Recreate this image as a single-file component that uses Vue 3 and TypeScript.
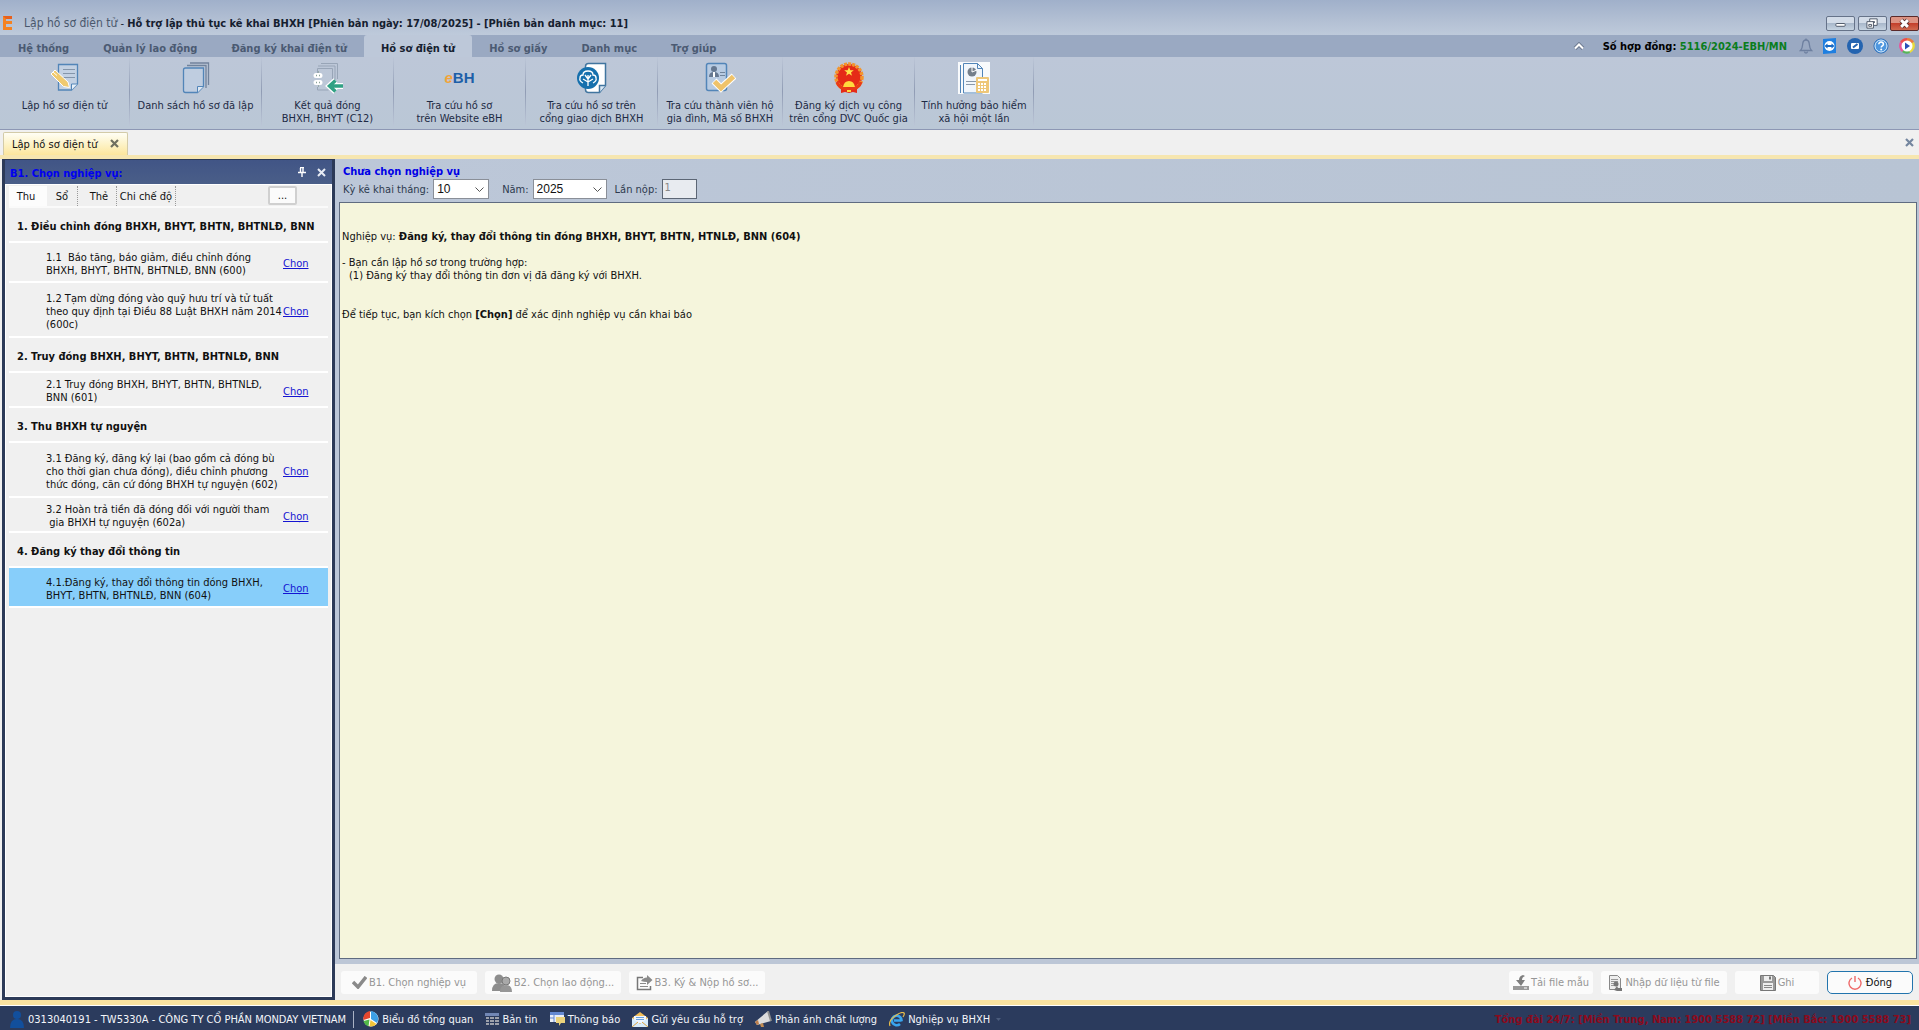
<script setup lang="ts">
import { ref } from 'vue'

interface Command {
  icon: string
  lines: string[]
  width: number
}
interface TaskRow {
  text: string[]
  heading?: boolean
  selected?: boolean
  size: 'two' | 'three' | 'head' | 'short'
}

const menuTabs = ['Hệ thống', 'Quản lý lao động', 'Đăng ký khai điện tử', 'Hồ sơ điện tử', 'Hồ sơ giấy', 'Danh mục', 'Trợ giúp']
const activeMenu = ref('Hồ sơ điện tử')

const commands: Command[] = [
  { icon: 'edit', lines: ['Lập hồ sơ điện tử'], width: 130 },
  { icon: 'pages', lines: ['Danh sách hồ sơ đã lập'], width: 132 },
  { icon: 'result', lines: ['Kết quả đóng', 'BHXH, BHYT (C12)'], width: 132 },
  { icon: 'ebh', lines: ['Tra cứu hồ sơ', 'trên Website eBH'], width: 132 },
  { icon: 'vss', lines: ['Tra cứu hồ sơ trên', 'cổng giao dịch BHXH'], width: 132 },
  { icon: 'member', lines: ['Tra cứu thành viên hộ', 'gia đình, Mã số BHXH'], width: 125 },
  { icon: 'emblem', lines: ['Đăng ký dịch vụ công', 'trên cổng DVC Quốc gia'], width: 132 },
  { icon: 'calc', lines: ['Tính hưởng bảo hiểm', 'xã hội một lần'], width: 119 },
]

const panelTabs = ['Thu', 'Sổ', 'Thẻ', 'Chi chế độ']
const activePanelTab = ref('Thu')

const rows: TaskRow[] = [
  { heading: true, size: 'head', text: ['1. Điều chỉnh đóng BHXH, BHYT, BHTN, BHTNLĐ, BNN'] },
  { size: 'two', text: ['1.1  Báo tăng, báo giảm, điều chỉnh đóng', 'BHXH, BHYT, BHTN, BHTNLĐ, BNN (600)'] },
  { size: 'three', text: ['1.2 Tạm dừng đóng vào quỹ hưu trí và tử tuất', 'theo quy định tại Điều 88 Luật BHXH năm 2014', '(600c)'] },
  { heading: true, size: 'head', text: ['2. Truy đóng BHXH, BHYT, BHTN, BHTNLĐ, BNN'] },
  { size: 'short', text: ['2.1 Truy đóng BHXH, BHYT, BHTN, BHTNLĐ,', 'BNN (601)'] },
  { heading: true, size: 'head', text: ['3. Thu BHXH tự nguyện'] },
  { size: 'three', text: ['3.1 Đăng ký, đăng ký lại (bao gồm cả đóng bù', 'cho thời gian chưa đóng), điều chỉnh phương', 'thức đóng, căn cứ đóng BHXH tự nguyện (602)'] },
  { size: 'short', text: ['3.2 Hoàn trả tiền đã đóng đối với người tham', ' gia BHXH tự nguyện (602a)'] },
  { heading: true, size: 'head', text: ['4. Đăng ký thay đổi thông tin'] },
  { size: 'two', selected: true, text: ['4.1.Đăng ký, thay đổi thông tin đóng BHXH,', 'BHYT, BHTN, BHTNLĐ, BNN (604)'] },
]

const month = ref('10')
const year = ref('2025')
const submission = ref('1')
</script>

<template>
  <div class="app">
    <header class="titlebar">
      <svg class="logo" width="10" height="14" viewBox="0 0 10 14">
        <path d="M0 0h9v3H3v2h6v3H3v3h6v3H0z" fill="#f58220" />
        <path d="M0 0h9v3H3z" fill="#e8601c" />
      </svg>
      <h1><span>Lập hồ sơ điện tử</span> - <b>Hỗ trợ lập thủ tục kê khai BHXH [Phiên bản ngày: 17/08/2025] - [Phiên bản danh mục: 11]</b></h1>
      <div class="winbtns">
        <button type="button" aria-label="Minimize">
          <svg width="29" height="13" viewBox="0 0 29 13"><rect x="9.500" y="6.500" width="10" height="3" rx="1" fill="#fff" stroke="#4a5464" /></svg>
        </button>
        <button type="button" aria-label="Restore">
          <svg width="29" height="13" viewBox="0 0 29 13">
            <path d="M11.500 1.500h8v7h-8z" fill="#fff" stroke="#4a5464" /><path d="M14 4h3v2h-3z" fill="#4a5464" />
            <path d="M8.500 4.500h7v7h-7z" fill="#fff" stroke="#4a5464" /><path d="M10.500 7.500h3v2h-3z" fill="none" stroke="#4a5464" />
          </svg>
        </button>
        <button type="button" class="red" aria-label="Close">
          <svg width="28" height="13" viewBox="0 0 28 13">
            <path d="M10.500 3l7 7M17.500 3l-7 7" stroke="#5a3030" stroke-width="5" /><path d="M10.500 3l7 7M17.500 3l-7 7" stroke="#fff" stroke-width="3" />
          </svg>
        </button>
      </div>
    </header>

    <div class="menubar">
      <nav>
        <button v-for="m in menuTabs" :key="m" type="button" :class="{ active: m === activeMenu }" @click="activeMenu = m">{{ m }}</button>
      </nav>
      <div class="contract">
        <svg class="chev" width="12" height="8" viewBox="0 0 12 8"><path d="M2 6.500l4-4 4 4" fill="none" stroke="#6d7a90" stroke-width="4" /><path d="M2 6.500l4-4 4 4" fill="none" stroke="#fff" stroke-width="2" /></svg>
        <span class="label">Số hợp đồng: <em>5116/2024-EBH/MN</em></span>
        <svg width="14" height="16" viewBox="0 0 14 16"><path d="M1.500 12.500c2-2 2-4 2.200-6.500.2-2.500 1.500-4 3.300-4s3.100 1.500 3.300 4c.2 2.500.2 4.500 2.200 6.500z" fill="none" stroke="#6d7f9f" stroke-width="1.300" /><path d="M5.500 13.500a1.500 1.500 0 0 0 3 0M7 .5v1.500" fill="none" stroke="#6d7f9f" stroke-width="1.300" /></svg>
        <svg width="14" height="16" viewBox="0 0 14 16"><path d="M0 1l13-1v15l-13 1z" fill="#1f7fe0" /><circle cx="6.500" cy="8" r="5" fill="#fff" /><path d="M1.500 8l3-2.500v1.500h4V5.500l3 2.500-3 2.500V9h-4v1.500z" fill="#1769c4" /></svg>
        <svg width="16" height="16" viewBox="0 0 16 16"><circle cx="8" cy="8" r="8" fill="#2464b0" /><rect x="4" y="5" width="8" height="6" rx="1" fill="#fff" /><path d="M6 9.500L10.500 6" stroke="#2464b0" stroke-width="2" /></svg>
        <svg width="16" height="16" viewBox="0 0 16 16"><circle cx="8" cy="8" r="7" fill="#4f97df" stroke="#2268b7" /><circle cx="8" cy="8" r="6" fill="none" stroke="#d8ebfb" /><path d="M5.800 6.200c0-3 4.600-2.700 4.600 0 0 1.600-2.200 1.600-2.200 3.300" fill="none" stroke="#fff" stroke-width="1.500" /><circle cx="8.200" cy="11.500" r="1" fill="#fff" /></svg>
        <svg width="16" height="16" viewBox="0 0 16 16"><path d="M8 8L1 4a8 8 0 0 1 7-4z" fill="#ee4d4d" /><path d="M8 8V0a8 8 0 0 1 7 4z" fill="#ec7a3c" /><path d="M8 8l7-4a8 8 0 0 1-4 11z" fill="#e9dc3c" /><path d="M8 8l3 7a8 8 0 0 1-8-1z" fill="#57b657" /><path d="M8 8l-5 6A8 8 0 0 1 1 4z" fill="#e7579b" /><circle cx="8" cy="8" r="5.500" fill="#fff" /><path d="M6 4.500l5 3.500-5 3.500z" fill="#2a50b8" /></svg>
      </div>
    </div>

    <div class="ribbon">
      <button v-for="c in commands" :key="c.icon" type="button" class="cmd" :style="{ width: c.width + 'px' }">
        <svg v-if="c.icon === 'edit'" width="32" height="32" viewBox="0 0 32 32">
          <path d="M9.500 2.500h19v19.500l-6 6h-13z" fill="#c3d1e3" stroke="#5285b8" stroke-width="1.300" /><path d="M22.500 28v-6h6" fill="#e8f0f8" stroke="#5285b8" />
          <path d="M14 7.500h12M14 11.500h12M14 15.500h12" stroke="#8495aa" />
          <path d="M2 12l4-4 13 12 1.500 5.500-6-1z" fill="#f0ca70" stroke="#fff" /><path d="M4 10l4 3.500" stroke="#fff" />
        </svg>
        <svg v-else-if="c.icon === 'pages'" width="32" height="32" viewBox="0 0 32 32">
          <path d="M10 1h18.500V23M7 3.500h19V26" fill="none" stroke="#71839c" stroke-width="1.300" />
          <path d="M3.500 8q0-2 2-2h18v18.500l-6 6h-12q-2 0-2-2z" fill="#bfcde0" stroke="#5285b8" stroke-width="1.300" /><path d="M17.500 30.500v-6h6" fill="#dde7f2" stroke="#5285b8" />
        </svg>
        <svg v-else-if="c.icon === 'result'" width="32" height="32" viewBox="0 0 32 32">
          <path d="M9 1.500h16.500V17M6 4h17v14M5.500 11V6.500h15V18M5.500 25v3h11" fill="none" stroke="#98a5b7" />
          <path d="M4 13.500h4M4 20.500h4" stroke="#fff" stroke-width="5" stroke-linecap="round" /><path d="M4 13.500h1M7 13.500h1M4 20.500h1M7 20.500h1M6 24h1M6 10h1" stroke="#8ca399" stroke-width="1.500" />
          <path d="M31 24H18M23.500 18.500l-6 5.500 6 5.500" fill="none" stroke="#fff" stroke-width="6" /><path d="M31 24H18M23.500 18.500l-6 5.500 6 5.500" fill="none" stroke="#31a184" stroke-width="3.500" />
        </svg>
        <span v-else-if="c.icon === 'ebh'" class="ebh"><i>e</i>BH</span>
        <svg v-else-if="c.icon === 'vss'" width="32" height="32" viewBox="0 0 32 32">
          <path d="M9.500 4.500q0-3 3-3h17v22l-6 7h-11q-3 0-3-3z" fill="#fff" stroke="#41759f" stroke-width="1.500" /><path d="M23.500 30.500v-7h6" fill="#dbe9f5" stroke="#41759f" stroke-width="1.500" />
          <circle cx="12" cy="16" r="11" fill="#1670ad" /><path d="M12 24V13M12 20l-5-3M12 20l5-3M12 17l-3-4M12 17l3-4M7 21q-4-2-3-5 0-3 3-3 0-4 5-4t5 4q3 0 3 3 1 3-3 5" fill="none" stroke="#fff" stroke-width="1.300" />
        </svg>
        <svg v-else-if="c.icon === 'member'" width="32" height="32" viewBox="0 0 32 32">
          <rect x="2.500" y="1.500" width="20" height="27" rx="2" fill="#b8cbe2" stroke="#5285b8" stroke-width="1.500" />
          <circle cx="10" cy="7" r="3" fill="#667890" /><path d="M5 15q0-5 5-5t5 5z" fill="#667890" /><path d="M10 10v5" stroke="#fff" stroke-width="2" /><path d="M16 10.500h5M16 13.500h5" stroke="#71849b" />
          <path d="M10 19l7 7 13-12" fill="none" stroke="#fff" stroke-width="7" /><path d="M10.500 19.500l6.500 6.500 12.500-11.500" fill="none" stroke="#efc36b" stroke-width="5" />
        </svg>
        <svg v-else-if="c.icon === 'emblem'" width="32" height="32" viewBox="0 0 32 32">
          <circle cx="16" cy="15" r="13" fill="#e52b17" stroke="#f4952c" stroke-width="3.500" stroke-dasharray="3 1" /><path d="M8 24q8 4 16 0v7l-4-1-4 1-4-1-4 1z" fill="#e52b17" /><path d="M4 20q2 7 12 7t12-7" fill="none" stroke="#e83a18" stroke-width="3" />
          <path d="M16 5l1.300 3.300h3.500l-2.800 2.100 1 3.400-3-2-3 2 1-3.400-2.800-2.100h3.500z" fill="#ffe34a" /><path d="M10 25q1-6 6-6t6 6z" fill="#ffd93d" /><path d="M14 29h4" stroke="#ffd93d" stroke-width="2" />
        </svg>
        <svg v-else width="32" height="32" viewBox="0 0 32 32">
          <path d="M0 0h32v32H0z" fill="#f8fafc" /><path d="M2.500 31V3M5.500 31V1.500h14l5 5V31z" fill="#f1f6fb" stroke="#5285b8" /><path d="M19.500 1.500v5h5" fill="none" stroke="#5285b8" />
          <circle cx="14" cy="10" r="4.500" fill="#747f8b" /><path d="M14 10V5M14 10l5-2" stroke="#fff" /><path d="M8 19.500h10M8 22.500h9" stroke="#8a99aa" />
          <rect x="18" y="15" width="13" height="16" rx="1" fill="#eec779" /><path d="M20 18h9" stroke="#fff" stroke-width="2" /><path d="M20 22h9M20 25h9M20 28h9" stroke="#fff" stroke-width="2" stroke-dasharray="2 1" />
        </svg>
        <span v-for="l in c.lines" :key="l" class="cap">{{ l }}</span>
      </button>
    </div>

    <div class="doctabs">
      <div class="doctab">
        <span>Lập hồ sơ điện tử</span>
        <button type="button" aria-label="Đóng thẻ"><svg width="9" height="9" viewBox="0 0 9 9"><path d="M1 1l7 7M8 1L1 8" stroke="#6f7060" stroke-width="2.200" /></svg></button>
      </div>
      <button type="button" class="closeall" aria-label="Đóng tất cả"><svg width="9" height="9" viewBox="0 0 9 9"><path d="M1 1l7 7M8 1L1 8" stroke="#74869f" stroke-width="2.200" /></svg></button>
    </div>

    <div class="workspace">
      <aside class="panel">
        <div class="panelhead">
          <h2>B1. Chọn nghiệp vụ:</h2>
          <button type="button" aria-label="Ghim"><svg width="8" height="10" viewBox="0 0 8 10"><path d="M2 .5h4M2.500 1v4M5 1v4M0 5.500h8M4 6v4" stroke="#fff" stroke-width="1.400" /></svg></button>
          <button type="button" aria-label="Đóng bảng"><svg width="9" height="9" viewBox="0 0 9 9"><path d="M1 1l7 7M8 1L1 8" stroke="#e8ecf4" stroke-width="2" /></svg></button>
        </div>
        <div class="panelbody">
          <div class="paneltabs">
            <button v-for="t in panelTabs" :key="t" type="button" class="ptab" :class="{ active: t === activePanelTab }" @click="activePanelTab = t">{{ t }}</button>
            <button type="button" class="more">...</button>
          </div>
          <div class="tasks">
            <div v-for="r in rows" :key="r.text[0]" class="row" :class="[r.size, { heading: r.heading, selected: r.selected }]">
              <h3 v-if="r.heading">{{ r.text[0] }}</h3>
              <template v-else>
                <p><span v-for="t in r.text" :key="t">{{ t }}</span></p>
                <a href="#">Chọn</a>
              </template>
            </div>
          </div>
        </div>
      </aside>

      <main class="content">
        <h2>Chưa chọn nghiệp vụ</h2>
        <form class="filters" @submit.prevent>
          <label for="month">Kỳ kê khai tháng:</label>
          <span class="combo month">
            <select id="month" v-model="month"><option v-for="n in 12" :key="n">{{ n }}</option></select>
            <svg width="9" height="5" viewBox="0 0 9 5"><path d="M.5.5l4 4 4-4" fill="none" stroke="#555" /></svg>
          </span>
          <label for="year">Năm:</label>
          <span class="combo year">
            <select id="year" v-model="year"><option>2024</option><option>2025</option></select>
            <svg width="9" height="5" viewBox="0 0 9 5"><path d="M.5.5l4 4 4-4" fill="none" stroke="#555" /></svg>
          </span>
          <label for="sub">Lần nộp:</label>
          <input id="sub" v-model="submission" type="text" disabled />
        </form>
        <article class="memo">
          <p>Nghiệp vụ: <b>Đăng ký, thay đổi thông tin đóng BHXH, BHYT, BHTN, HTNLĐ, BNN (604)</b></p>
          <p class="gap1">- Bạn cần lập hồ sơ trong trường hợp:</p>
          <p class="indent">(1) Đăng ký thay đổi thông tin đơn vị đã đăng ký với BHXH.</p>
          <p class="gap2">Để tiếp tục, bạn kích chọn <b>[Chọn]</b> để xác định nghiệp vụ cần khai báo</p>
        </article>
        <div class="actions">
          <button type="button" disabled class="step">
            <svg width="15" height="13" viewBox="0 0 15 13"><path d="M1 6l5 5L14 1" fill="none" stroke="#8a8a8a" stroke-width="3.500" /></svg>B1. Chọn nghiệp vụ
          </button>
          <button type="button" disabled class="step">
            <svg width="20" height="18" viewBox="0 0 20 18"><circle cx="7" cy="5" r="4.500" fill="#8d8d8d" /><path d="M0 17q0-8 7-8t7 8z" fill="#8d8d8d" /><circle cx="14" cy="7" r="4" fill="#a9a9a9" stroke="#787878" /><path d="M8 18q0-7 6-7t6 7z" fill="#969696" /></svg>B2. Chọn lao động...
          </button>
          <button type="button" disabled class="step">
            <svg width="17" height="16" viewBox="0 0 17 16"><path d="M7 2.500H1.500v12h13V11" fill="none" stroke="#777" stroke-width="1.500" /><path d="M4 8.500h6M4 11.500h8" stroke="#8a8a8a" /><path d="M5 6q2-3.500 6-3.500V0l5.500 5-5.500 5V7q-3 0-6-1z" fill="#8a8a8a" /></svg>B3. Ký &amp; Nộp hồ sơ...
          </button>
          <span class="spacer"></span>
          <button type="button" disabled class="small">
            <svg width="16" height="16" viewBox="0 0 16 16"><path d="M0 11h16v4H0z" fill="#999" /><path d="M10 0q-4 1-4 5H3l5 6 4-6H9q0-3 3-4z" fill="#7e7e7e" /><path d="M11 13h3" stroke="#fff" /></svg>Tải file mẫu
          </button>
          <button type="button" disabled class="medium">
            <svg width="15" height="16" viewBox="0 0 15 16"><path d="M1.500.5h8l3 3v11h-11z" fill="#eee" stroke="#888" /><path d="M3 4.500h7M3 6.500h7M3 8.500h5M3 10.500h3" stroke="#999" /><circle cx="8" cy="9" r="2.500" fill="#777" /><path d="M6 15l3-4 1 2h4v3h-5z" fill="#777" /></svg>Nhập dữ liệu từ file
          </button>
          <button type="button" disabled class="small">
            <svg width="16" height="16" viewBox="0 0 16 16"><path d="M.5.500h13l2 2v13H.5z" fill="#9a9a9a" stroke="#777" /><path d="M4 1h8v5H4z" fill="#eee" /><path d="M9 1.500h2v3H9z" fill="#777" /><path d="M3 8h10v7H3z" fill="#eee" /><path d="M4 10.500h8M4 12.500h8" stroke="#888" /></svg>Ghi
          </button>
          <button type="button" class="close">
            <svg width="14" height="14" viewBox="0 0 14 14"><path d="M4 2a6 6 0 1 0 6 0M7 0v6" fill="none" stroke="#ee6a6a" stroke-width="1.400" /></svg>Đóng
          </button>
        </div>
      </main>
    </div>

    <footer class="status">
      <span class="item user">
        <svg width="14" height="17" viewBox="0 0 14 17"><circle cx="7" cy="4" r="4" fill="#124f9c" /><path d="M0 17q0-9 7-9t7 9z" fill="#124f9c" /></svg>0313040191 - TW5330A - CÔNG TY CỔ PHẦN MONDAY VIETNAM
      </span>
      <a href="#" class="item">
        <svg width="16" height="16" viewBox="0 0 16 16"><circle cx="8" cy="8" r="7.500" fill="#fff" /><path d="M7 7V0a7.500 7.500 0 0 0-6.500 9z" fill="#e5472e" /><path d="M8 8V0a8 8 0 0 1 6 12z" fill="#3d9fe6" /><path d="M7.500 9l6 4a8 8 0 0 1-7 2.500z" fill="#f2c53a" /><path d="M6.500 8.500l-1 7A8 8 0 0 1 .5 10z" fill="#51b848" /></svg>Biểu đồ tổng quan
      </a>
      <a href="#" class="item">
        <svg width="14" height="13" viewBox="0 0 14 13"><path d="M0 0h14v3H0z" fill="#7187b5" /><path d="M1 5h3M5 5h4M10 5h4M1 8h3M5 8h4M10 8h4M1 11h3M5 11h4M10 11h4" stroke="#9da1ab" stroke-width="2" /></svg>Bản tin
      </a>
      <a href="#" class="item">
        <svg width="15" height="14" viewBox="0 0 15 14"><path d="M0 0h14v10H0z" fill="#e9eef8" /><path d="M0 0h14v3H0z" fill="#6489d2" /><path d="M4 3v7M0 6h4" stroke="#6489d2" /><path d="M6 5h9v6h-4l-2 3v-3H6z" fill="#ead27c" /></svg>Thông báo
      </a>
      <a href="#" class="item">
        <svg width="16" height="15" viewBox="0 0 16 15"><path d="M0 6l8-6 8 6v9H0z" fill="#f1bd58" /><path d="M2 4h12v7H2z" fill="#eff6ff" /><path d="M4 5.500h8M4 7.500h8" stroke="#6aa3df" /><path d="M0 6l8 6 8-6v9H0z" fill="#d8ebfb" /><path d="M0 15l6-5M16 15l-6-5" stroke="#dea23e" /></svg>Gửi yêu cầu hỗ trợ
      </a>
      <a href="#" class="item">
        <svg width="17" height="16" viewBox="0 0 17 16"><path d="M0 11L13 0l3 10-14 4z" fill="#dcdcdc" /><path d="M13 0l3 10" stroke="#8e8e8e" stroke-width="2" /><path d="M5 13l1 3h3l-1-4z" fill="#c28d54" /><path d="M0 11l3-2 1 4-2 1z" fill="#bc7d4a" /></svg>Phản ánh chất lượng
      </a>
      <a href="#" class="item">
        <svg width="16" height="15" viewBox="0 0 16 15"><path d="M12.500 8.500H5M12.500 9a4.800 4.800 0 1 0-1.500 3" fill="none" stroke="#39a5ee" stroke-width="2.600" /><path d="M1 14Q-1 9 6 4t9-3q1 1-1 4" fill="none" stroke="#e8bd4b" stroke-width="1.200" /></svg>Nghiệp vụ BHXH
        <svg class="arrow" width="5" height="3" viewBox="0 0 5 3"><path d="M0 0h5L2.500 3z" fill="#4b5c7c" /></svg>
      </a>
      <strong>Tổng đài 24/7: [Miền Trung, Nam: 1900 5588 72] [Miền Bắc: 1900 5588 73]</strong>
    </footer>
  </div>
</template>

<style>
body { margin: 0; }
</style>

<style scoped>
.app {
  display: flex;
  flex-direction: column;
  min-height: 100vh;
  background: #f0f0f0;
  font: 11px/13px "DejaVu Sans Condensed", "DejaVu Sans", sans-serif;
  color: #111;
}
* { box-sizing: border-box; }
button, select, input { font: inherit; color: inherit; margin: 0; }
button { padding: 0; border: 0; background: none; white-space: nowrap; }
h1, h2, h3, p { margin: 0; font-size: 11px; white-space: pre; }
svg { flex: none; }

.titlebar { display: flex; align-items: center; height: 35px; padding: 11px 0 0 3px; background: linear-gradient(#a0b0ca, #b3c0d4 60%, #becadb); }
.logo { margin-right: 11px; }
h1 { flex: 1; font-weight: normal; color: #15202f; }
h1 span { font-size: 12px; color: #4a586c; }
.winbtns { display: flex; gap: 3px; }
.winbtns button { height: 15px; border: 1px solid #667389; border-radius: 2px; background: linear-gradient(#d3dce8 45%, #a9b8cb 50%, #c6d4e2); }
.winbtns svg { display: block; width: 27px; }
.winbtns .red { border-color: #5b2a2a; background: linear-gradient(#dd9484 45%, #c4402c 50%, #d06a50); }

.menubar { display: flex; justify-content: space-between; height: 22px; background: #9aa9c2; }
nav { display: flex; padding-left: 1px; }
nav button { padding: 4px 17px 0; font-weight: bold; color: #4b5a72; }
nav .active { background: #bdc8d9; color: #15202f; border-radius: 3px 3px 0 0; }
.contract { display: flex; align-items: center; gap: 10px; padding-right: 4px; }
.label { margin-right: 2px; font-weight: bold; color: #000; }
.contract em { font-style: normal; color: #0a7d1c; }
.chev { margin-right: 8px; }

.ribbon { display: flex; height: 73px; padding-bottom: 3px; background: linear-gradient(#bdc7d8, #bac7d6); border-bottom: 1px solid #8d97b4; }
.cmd { display: flex; flex-direction: column; align-items: center; padding-top: 5px; border-right: 1px solid; border-image: linear-gradient(#bdc7d8, #909cb4 50%, #bdc7d8) 1; color: #1d2a44; }
.cmd svg, .ebh { height: 32px; margin-bottom: 5px; }
.ebh { font: bold 15px/32px "Liberation Sans", sans-serif; color: #1d5fa8; }
.ebh i { color: #f2a43a; }
.cap { white-space: pre; }

.doctabs { display: flex; justify-content: space-between; height: 29px; padding: 2px 5px 0 3px; border-bottom: 4px solid #f6e6b0; }
.doctab { display: flex; align-items: center; gap: 12px; padding: 0 8px; border: 1px solid #d3cba8; border-bottom: 0; border-radius: 2px 2px 0 0; background: linear-gradient(#fffef5, #fdf3c8 50%, #fce69d); }

.workspace { display: flex; flex: 1; padding-left: 2px; border-bottom: 5px solid #fae3a0; }
.panel { display: flex; flex-direction: column; width: 333px; padding: 1px 3px 3px; background: #2c3a58; }
.panelhead { display: flex; align-items: center; gap: 11px; height: 24px; padding: 3px 6px 0 5px; background: linear-gradient(#415586, #4a5e88); }
.panelhead h2 { flex: 1; color: #0000f0; }
.panelbody { display: flex; flex: 1; flex-direction: column; padding: 1px 3px; background: #f0f0f0; border: 1px solid #fff; }
.paneltabs { display: flex; height: 20px; }
.ptab { width: 31px; border-right: 1px dotted #999; }
.ptab.active { width: 38px; padding-right: 4px; background: #fcfcfc; border: 0; }
.ptab:nth-child(3) { width: 39px; padding-left: 4px; }
.ptab:nth-child(4) { width: 59px; }
.more { width: 29px; height: 19px; margin-left: 92px; border: 2px solid #d0d0d0; border-radius: 2px; background: #fbfbfb; }
.tasks { border-top: 2px solid #fafafa; }
.row { display: flex; align-items: center; border-bottom: 2px solid #fff; }
.row.head { height: 35px; padding: 3px 8px 0; }
.row.two { height: 40px; padding-top: 3px; }
.row.short { height: 35px; padding-top: 3px; }
.row.three { height: 55px; padding-top: 3px; }
.row p { flex: none; width: 274px; padding-left: 37px; }
.row p span { display: block; }
.row a { color: #1414d2; text-decoration-skip-ink: none; }
.selected { background: #87cefa; }

.content { display: flex; flex: 1; flex-direction: column; min-width: 0; background: linear-gradient(90deg, #bcc7d8, #b8c4d4); }
.content h2 { padding: 6px 0 0 8px; line-height: 14px; color: #0000e6; }
.filters { display: flex; align-items: center; height: 20px; padding-left: 8px; color: #2d3a4e; }
.filters label { margin-right: 4px; }
.combo { display: flex; position: relative; height: 20px; margin-right: 13px; }
.combo svg { position: absolute; right: 5px; top: 8px; pointer-events: none; }
.combo select { width: 100%; padding: 0 3px; appearance: none; border: 1px solid #8a8f98; background: #fff; font: 12px "Liberation Sans", sans-serif; color: #111; }
.month { width: 56px; }
.year { width: 74px; margin-right: 8px; }
.filters input { width: 35px; height: 20px; padding: 0 2px 3px; border: 1px solid #5c6675; background: #e8ebf0; color: #888; }
.memo { flex: 1; margin: 3px 2px 0 4px; padding: 27px 2px; border: 1px solid #5f6b80; background: #f5f5dc; }
.gap1 { margin-top: 13px; }
.indent { padding-left: 7px; }
.gap2 { margin-top: 26px; }
.actions { display: flex; align-items: center; gap: 8px; height: 41px; padding: 1px 6px 0 6px; border-top: 5px solid #bcc6d6; background: #f0f0f0; }
.actions button { display: flex; align-items: center; justify-content: center; gap: 2px; height: 23px; border-radius: 3px; background: #fbfbfb; color: #969696; }
.actions .step { width: 136px; }
.actions .small { width: 84px; }
.actions .medium { width: 126px; }
.actions .close { gap: 4px; width: 86px; border: 1px solid #2274ad; border-radius: 5px; color: #111; }
.spacer { flex: 1; }

.status { display: flex; align-items: center; gap: 9px; height: 25px; padding: 2px 8px 0 10px; background: #2b3b5d; color: #f4f6fa; border-top: 1px solid #fff; }
.item { display: flex; align-items: center; gap: 3px; color: inherit; text-decoration: none; white-space: pre; }
.user { gap: 4px; padding-right: 4px; border-right: 1px solid #a9b2c4; }
.status strong { flex: 1; text-align: right; color: #8b0a1c; }
</style>
